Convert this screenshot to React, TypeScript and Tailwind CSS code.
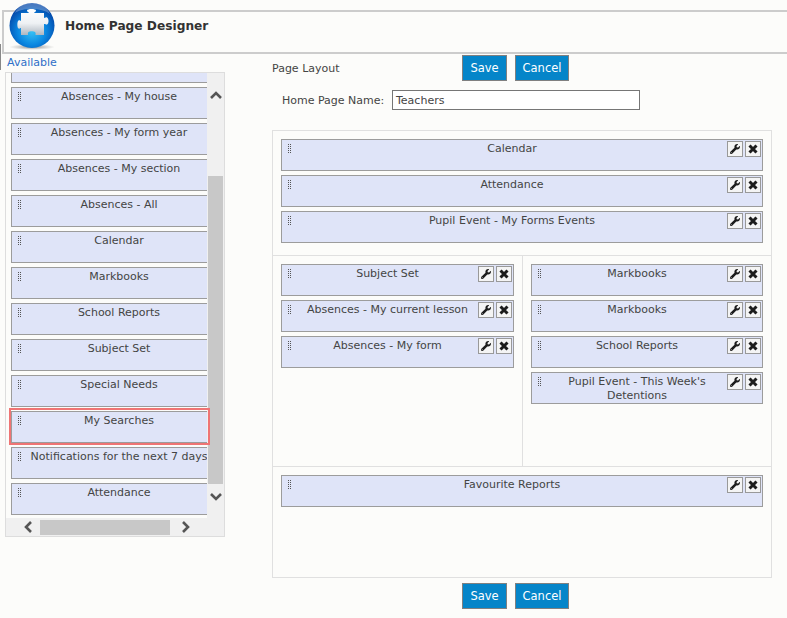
import { FaWrench } from "react-icons/fa";

const PALETTE = [
  "",
  "Absences - My house",
  "Absences - My form year",
  "Absences - My section",
  "Absences - All",
  "Calendar",
  "Markbooks",
  "School Reports",
  "Subject Set",
  "Special Needs",
  "My Searches",
  "Notifications for the next 7 days",
  "Attendance",
];

function DragHandle() {
  return (
    <svg width="4" height="10" viewBox="0 0 4 10" className="mt-[4px] ml-[6px] shrink-0" aria-hidden="true">
      {[0, 2, 4, 6, 8].map((y) => (
        <g key={y} fill="#555555">
          <rect x="0" y={y} width="1" height="1" />
          <rect x="2" y={y} width="1" height="1" />
        </g>
      ))}
    </svg>
  );
}

function ToolButton({ children }: { children: React.ReactNode }) {
  return (
    <button className="flex h-4 w-4 items-center justify-center border border-[#999999] bg-[#f4f4f4] text-[#1c1c1c]">
      {children}
    </button>
  );
}

function Widget({ title, tools = true }: { title: string; tools?: boolean }) {
  return (
    <div className="flex h-8 shrink-0 border border-[#9c9c9c] bg-[#dfe4f8] text-[#444444]">
      <div className="w-4 shrink-0">
        <DragHandle />
      </div>
      <div className="min-w-0 flex-1 pt-[2px] text-center leading-[14px]">{title}</div>
      {tools ? (
        <div className="mt-[1px] ml-[1px] mr-[1px] flex shrink-0 gap-[2px] self-start">
          <ToolButton>
            <FaWrench size={10} />
          </ToolButton>
          <ToolButton>
            <svg width="12" height="12" viewBox="0 0 12 12" aria-hidden="true">
              <path d="M2.5 2.5 L9.5 9.5 M9.5 2.5 L2.5 9.5" fill="none" stroke="#1c1c1c" strokeWidth="3" />
            </svg>
          </ToolButton>
        </div>
      ) : null}
    </div>
  );
}

function Actions() {
  return (
    <div className="flex gap-2">
      <button className="h-[26px] w-[45px] border border-[#808080] bg-[#0585c9] pt-[2px] text-[11.5px] text-white">Save</button>
      <button className="h-[26px] w-[54px] border border-[#808080] bg-[#0585c9] pt-[2px] text-[11.5px] text-white">Cancel</button>
    </div>
  );
}

function Logo() {
  return (
    <svg width="54" height="52" viewBox="0 0 54 52" className="absolute left-[5px] top-0" aria-hidden="true">
      <defs>
        <radialGradient id="orb" cx="50%" cy="62%" r="58%">
          <stop offset="0%" stopColor="#38c4f6" />
          <stop offset="55%" stopColor="#0a86e0" />
          <stop offset="100%" stopColor="#0347a8" />
        </radialGradient>
        <linearGradient id="piece" x1="0" y1="0" x2="0" y2="1">
          <stop offset="0%" stopColor="#ffffff" />
          <stop offset="55%" stopColor="#eef1f4" />
          <stop offset="100%" stopColor="#aeb6c0" />
        </linearGradient>
        <radialGradient id="shade" cx="50%" cy="50%" r="50%">
          <stop offset="0%" stopColor="#555555" stopOpacity="0.7" />
          <stop offset="100%" stopColor="#888888" stopOpacity="0" />
        </radialGradient>
      </defs>
      <ellipse cx="27" cy="47" rx="23" ry="3" fill="url(#shade)" />
      <circle cx="27" cy="25.5" r="22.5" fill="url(#orb)" />
      <path d="M10 13 C14 4 24 2 30 3 C38 4 43 9 45 14 C38 8 18 7 10 13 Z" fill="#ffffff" fillOpacity="0.28" />
      <path
        d="M16 13 H24 C24 12 22 12 22 10.5 C22 8.5 31 8.5 31 10.5 C31 12 29 12 29 13 H39 V18 C41 18 41 17 42 17.5 C44 18.5 44 23.5 42 24.5 C41 25 41 24 39 24 V35 H30.5 C30.5 33.5 31 33 30 32 C29 31 24.5 31 23.5 32 C22.5 33 23 33.5 23 35 H16 V28 C15 28 15 29 13.5 28.5 C12 27.5 12 21.5 13.5 20.5 C15 20 15 21 16 21 Z"
        fill="url(#piece)"
      />
    </svg>
  );
}

export default function App() {
  return (
    <div className="relative h-[618px] w-[787px] overflow-hidden bg-[#fcfcfa] font-['DejaVu_Sans','Verdana',sans-serif] text-[11px]">
      <div className="absolute left-0 top-[44px] h-[26px] w-[2px] border-l border-[#888888]" />

      <header className="ml-[2px] mt-[10px] flex h-[44px] items-start border-y-2 border-l-2 border-[#cccccc] pl-[61px] pt-[5px]">
        <h1 className="text-[12.2px] font-bold leading-[18px] text-[#333333]">Home Page Designer</h1>
      </header>
      <Logo />

      <div className="flex">
        <section className="ml-[5px] w-[220px] shrink-0">
          <div className="ml-[2px] h-[18px] text-[11px] leading-[17px] text-[#2f6fc8]">Available</div>
          <div className="relative h-[465px] border border-[#dddddd] bg-[#f0f0f0]">
            <div className="flex h-[445px]">
              <div className="h-full w-[201px] overflow-hidden bg-[#fcfcfa]">
                <div className="ml-[5px] -mt-[22px] flex w-[200px] flex-col gap-1">
                  {PALETTE.map((title, i) => (
                    <Widget key={i} title={title} tools={false} />
                  ))}
                </div>
              </div>
              <div className="flex w-[17px] flex-col items-center">
                <svg width="14" height="10" viewBox="0 0 14 10" className="mt-[17px]" aria-hidden="true">
                  <path d="M2 8 L7 3 L12 8" fill="none" stroke="#555555" strokeWidth="2.6" />
                </svg>
                <div className="mt-[76px] h-[308px] w-[15px] bg-[#c8c8c8]" />
                <svg width="14" height="10" viewBox="0 0 14 10" className="mt-[8px]" aria-hidden="true">
                  <path d="M2 2 L7 7 L12 2" fill="none" stroke="#555555" strokeWidth="2.6" />
                </svg>
              </div>
            </div>
            <div className="flex h-[18px] items-center pl-[17px]">
              <svg width="10" height="14" viewBox="0 0 10 14" aria-hidden="true">
                <path d="M8 2 L3 7 L8 12" fill="none" stroke="#555555" strokeWidth="2.6" />
              </svg>
              <div className="ml-[7px] h-[15px] w-[130px] bg-[#c8c8c8]" />
              <svg width="10" height="14" viewBox="0 0 10 14" className="ml-[11px]" aria-hidden="true">
                <path d="M2 2 L7 7 L2 12" fill="none" stroke="#555555" strokeWidth="2.6" />
              </svg>
            </div>
            {/* drop target highlight */}
            <div className="pointer-events-none absolute left-[3px] top-[335px] h-[37px] w-[201px] border-2 border-[#ef7474]" />
          </div>
        </section>

        <section className="ml-[47px] w-[500px] shrink-0">
          <div className="mt-[1px] flex items-center">
            <div className="w-[190px] pt-[2px] text-[#444444]">Page Layout</div>
            <Actions />
          </div>
          <div className="ml-[10px] mt-[9px] flex h-5 items-center">
            <label className="w-[110px] pt-[2px] text-[#444444]">Home Page Name:</label>
            <div className="flex h-5 w-[248px] items-center border border-[#767676] bg-white pl-[3px] pt-[2px] text-[#444444]">
              Teachers
            </div>
          </div>

          <div className="mt-5 h-[448px] border border-[#e0e0e0]">
            <div className="flex h-[124px] flex-col gap-1 px-2 pt-2">
              <Widget title="Calendar" />
              <Widget title="Attendance" />
              <Widget title="Pupil Event - My Forms Events" />
            </div>
            <div className="flex h-[212px] border-y border-[#e0e0e0]">
              <div className="flex w-[250px] flex-col gap-1 border-r border-[#e0e0e0] px-2 pt-2">
                <Widget title="Subject Set" />
                <Widget title="Absences - My current lesson" />
                <Widget title="Absences - My form" />
              </div>
              <div className="flex flex-1 flex-col gap-1 px-2 pt-2">
                <Widget title="Markbooks" />
                <Widget title="Markbooks" />
                <Widget title="School Reports" />
                <Widget title="Pupil Event - This Week's Detentions" />
              </div>
            </div>
            <div className="flex flex-col px-2 pt-2">
              <Widget title="Favourite Reports" />
            </div>
          </div>

          <div className="ml-[190px] mt-[5px]">
            <Actions />
          </div>
        </section>
      </div>
    </div>
  );
}
